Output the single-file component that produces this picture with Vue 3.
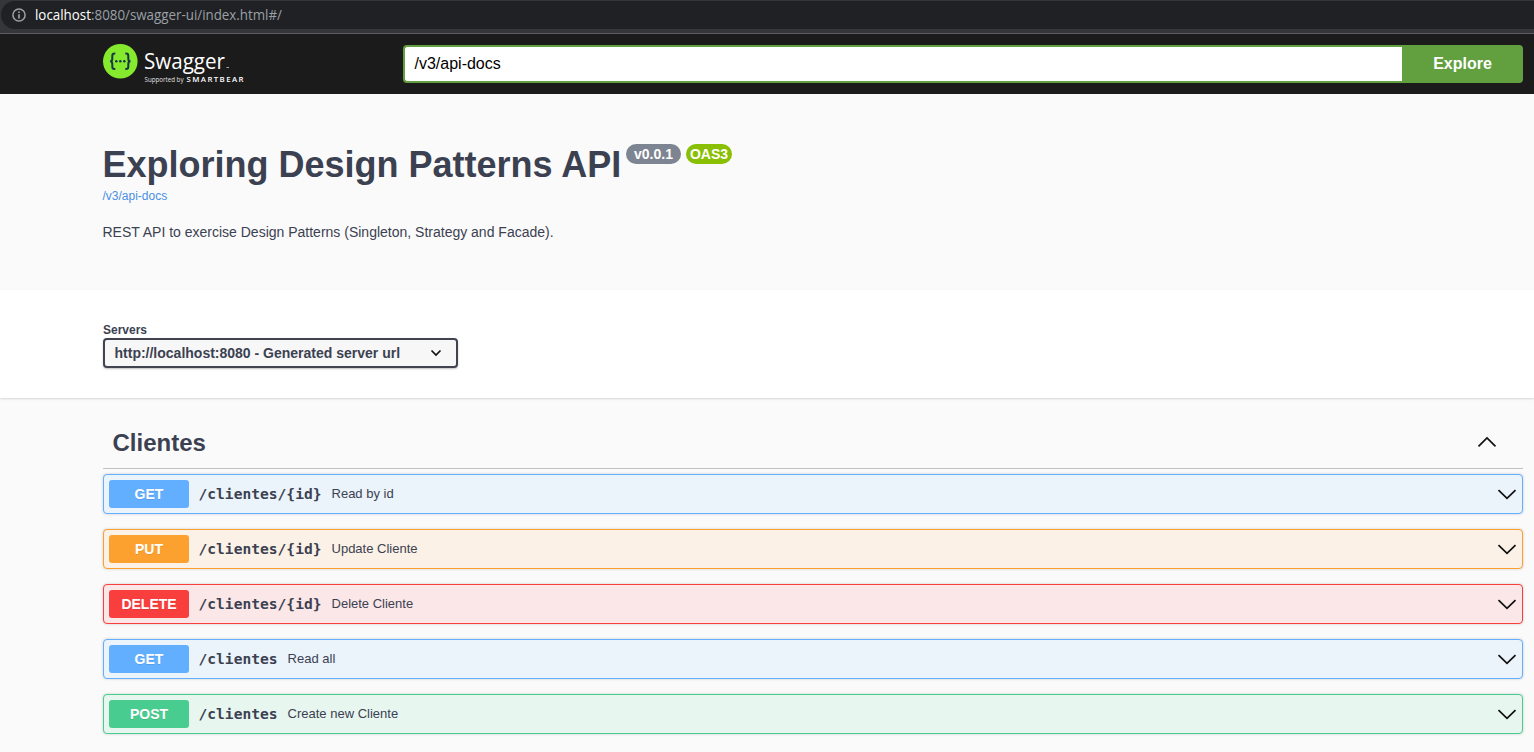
<script setup>
const operations = [
  { method: 'GET', path: '/clientes/{id}', summary: 'Read by id' },
  { method: 'PUT', path: '/clientes/{id}', summary: 'Update Cliente' },
  { method: 'DELETE', path: '/clientes/{id}', summary: 'Delete Cliente' },
  { method: 'GET', path: '/clientes', summary: 'Read all' },
  { method: 'POST', path: '/clientes', summary: 'Create new Cliente' },
]
</script>

<template>
  <div class="page">
    <div class="browser">
      <div class="address">
        <svg class="info-icon" width="14" height="14" viewBox="0 0 14 14">
          <circle cx="7" cy="7" r="6.1" fill="none" stroke="#9aa0a6" stroke-width="1.5" />
          <path d="M7 6.2V10.4M7 3.5V5" stroke="#9aa0a6" stroke-width="1.7" />
        </svg>
        <svg class="url" width="260" height="24" viewBox="0 0 260 24">
          <text x="0" y="17" fill="#fff" textLength="56" lengthAdjust="spacingAndGlyphs">localhost</text>
          <text x="56" y="17" fill="#9aa0a6" textLength="191" lengthAdjust="spacingAndGlyphs">:8080/swagger-ui/index.html#/</text>
        </svg>
      </div>
    </div>

    <header class="topbar">
      <svg class="logo" width="150" height="46" viewBox="0 0 150 46">
        <circle cx="17.3" cy="20.3" r="17.3" fill="#85ea2d" />
        <g fill="none" stroke="#173647" stroke-width="2">
          <path d="M12.300 12.600h-.8q-2.200 0-2.200 2.300v2.800q0 2.600-2.200 2.600q2.200 0 2.200 2.600v2.800q0 2.300 2.200 2.300h.8" />
          <path d="M22.300 12.600h.8q2.200 0 2.200 2.300v2.800q0 2.600 2.200 2.600q-2.200 0-2.200 2.600v2.800q0 2.300-2.200 2.300h-.8" />
        </g>
        <g fill="#173647">
          <circle cx="13.300" cy="20.300" r="1.250" />
          <circle cx="17.300" cy="20.300" r="1.250" />
          <circle cx="21.300" cy="20.300" r="1.250" />
        </g>
        <text class="brand" x="41" y="27.500" textLength="81" lengthAdjust="spacingAndGlyphs">Swagger</text>
        <path d="M123.500 26.500h2.500" stroke="#aaa" stroke-width="1" />
        <text class="support" x="41.500" y="41" textLength="39" lengthAdjust="spacingAndGlyphs">Supported by</text>
        <text class="smart" x="83.500" y="41" textLength="57">SMARTBEAR</text>
      </svg>
      <div class="search">
        <div class="input">/v3/api-docs</div>
        <div class="explore">Explore</div>
      </div>
    </header>

    <section class="info">
      <div class="heading">
        <h1>Exploring Design Patterns API</h1>
        <span class="badge version">v0.0.1</span>
        <span class="badge oas">OAS3</span>
      </div>
      <a class="docs">/v3/api-docs</a>
      <p class="description">REST API to exercise Design Patterns (Singleton, Strategy and Facade).</p>
    </section>

    <section class="servers">
      <div class="label">Servers</div>
      <div class="select">
        <span>http://localhost:8080 - Generated server url</span>
        <svg width="12" height="8" viewBox="0 0 12 8">
          <path d="M1.500 1.500L6 6L10.500 1.500" fill="none" stroke="#111" stroke-width="1.700" />
        </svg>
      </div>
    </section>

    <main class="operations">
      <div class="tag">
        <h3>Clientes</h3>
        <svg width="20" height="12" viewBox="0 0 20 12">
          <path d="M1.500 10.300L10 2L18.500 10.300" fill="none" stroke="#111" stroke-width="1.700" />
        </svg>
      </div>
      <div v-for="op in operations" :key="op.method + op.path" class="op" :class="op.method.toLowerCase()">
        <span class="method">{{ op.method }}</span>
        <span class="path">{{ op.path }}</span>
        <span class="summary">{{ op.summary }}</span>
        <svg width="20" height="12" viewBox="0 0 20 12">
          <path d="M1.500 2.100L10 10.400L18.500 2.100" fill="none" stroke="#111" stroke-width="1.700" />
        </svg>
      </div>
    </main>
  </div>
</template>

<style>
body {
  background: #fafafa;
}
</style>

<style scoped>
* {
  box-sizing: border-box;
}
.page {
  height: 752px;
  overflow: hidden;
  background: #fafafa;
  color: #3b4151;
  font-family: 'Liberation Sans', Arial, sans-serif;
}
.browser {
  height: 34px;
  padding: 1px 0 0 1px;
  background: #35363a;
  border-bottom: 1px solid #5c5e62;
}
.address {
  display: flex;
  align-items: center;
  height: 28px;
  padding-left: 11px;
  background: #202124;
  border-radius: 14px 0 0 14px;
}
.url {
  margin-left: 9px;
  font: 14px 'Open Sans', sans-serif;
}
.topbar {
  display: flex;
  height: 60px;
  padding: 7px 11px 0 103px;
  background: #1b1b1b;
}
.logo {
  margin-top: 0;
}
.brand {
  font: 400 22.5px 'Open Sans', sans-serif;
  fill: #fff;
}
.support {
  font: 6.5px 'Open Sans', sans-serif;
  fill: #e0e0e0;
}
.smart {
  font: 600 7.8px 'Open Sans', sans-serif;
  fill: #fff;
}
.search {
  display: flex;
  width: 1120px;
  height: 38px;
  margin: 4px 0 0 150px;
}
.input {
  width: 999px;
  padding-left: 9.5px;
  border: 2px solid #62a03f;
  border-right: 0;
  border-radius: 4px 0 0 4px;
  background: #fff;
  color: #000;
  font-size: 16px;
  line-height: 33px;
}
.explore {
  flex: 1;
  background: #62a03f;
  border-radius: 0 4px 4px 0;
  color: #fff;
  font-size: 16px;
  font-weight: 700;
  line-height: 37px;
  text-align: center;
}
.info {
  height: 196px;
  padding: 50px 0 0 102.5px;
}
.heading {
  display: flex;
  align-items: flex-start;
  height: 42px;
}
h1 {
  width: 519px;
  margin: 0 4.5px 0 0;
  font-size: 36px;
  line-height: 41px;
  white-space: nowrap;
}
.badge {
  height: 20px;
  border-radius: 10px;
  color: #fff;
  font-size: 14px;
  font-weight: 700;
  line-height: 20px;
  text-align: center;
}
.version {
  width: 55px;
  margin-right: 5px;
  background: #7d8492;
}
.oas {
  width: 46px;
  background: #89bf04;
}
.docs {
  display: block;
  font-size: 12px;
  line-height: 20px;
  color: #4990e2;
}
.description {
  margin: 16px 0 0;
  font-size: 14px;
  line-height: 20px;
}
.servers {
  height: 108px;
  padding: 33px 0 0 103px;
  background: #fff;
  box-shadow: 0 1px 2px rgba(0, 0, 0, 0.15);
}
.label {
  height: 15px;
  font-size: 12px;
  font-weight: 700;
  line-height: 14px;
}
.select {
  display: flex;
  align-items: center;
  justify-content: space-between;
  width: 355px;
  height: 30px;
  padding: 0 14px 0 9.5px;
  border: 2px solid #41444e;
  border-radius: 4px;
  background: #f7f7f7;
  box-shadow: 0 1px 2px rgba(0, 0, 0, 0.25);
  font-size: 14px;
  font-weight: 700;
}
.operations {
  padding: 20px 11px 0 103px;
}
.tag {
  display: flex;
  align-items: center;
  justify-content: space-between;
  height: 51px;
  margin-bottom: 5px;
  padding: 0 26px 0 9.5px;
  border-bottom: 1px solid #bfc1c5;
}
.tag svg {
  margin-bottom: 3px;
}
h3 {
  margin: 0;
  font-size: 24px;
  line-height: 28px;
}
.op {
  display: flex;
  align-items: center;
  height: 40px;
  margin-bottom: 15px;
  padding: 0 5px;
  border: 1px solid var(--color);
  border-radius: 4px;
  background: var(--tint);
  box-shadow: 0 0 3px rgba(0, 0, 0, 0.19);
}
.op svg {
  margin-left: auto;
}
.method {
  width: 80px;
  height: 28px;
  border-radius: 3px;
  background: var(--color);
  color: #fff;
  font-size: 14px;
  font-weight: 700;
  line-height: 28px;
  text-align: center;
  text-shadow: 0 1px 0 rgba(0, 0, 0, 0.1);
}
.path {
  margin: 0 0 2px 9.5px;
  font: 700 14.6px 'DejaVu Sans Mono', monospace;
}
.summary {
  margin: 0 0 2px 10px;
  font-size: 13px;
}
.get {
  --color: #61affe;
  --tint: #ebf3fb;
}
.put {
  --color: #fca130;
  --tint: #fbf1e6;
}
.delete {
  --color: #f93e3e;
  --tint: #fbe7e7;
}
.post {
  --color: #49cc90;
  --tint: #e8f6f0;
}
</style>
